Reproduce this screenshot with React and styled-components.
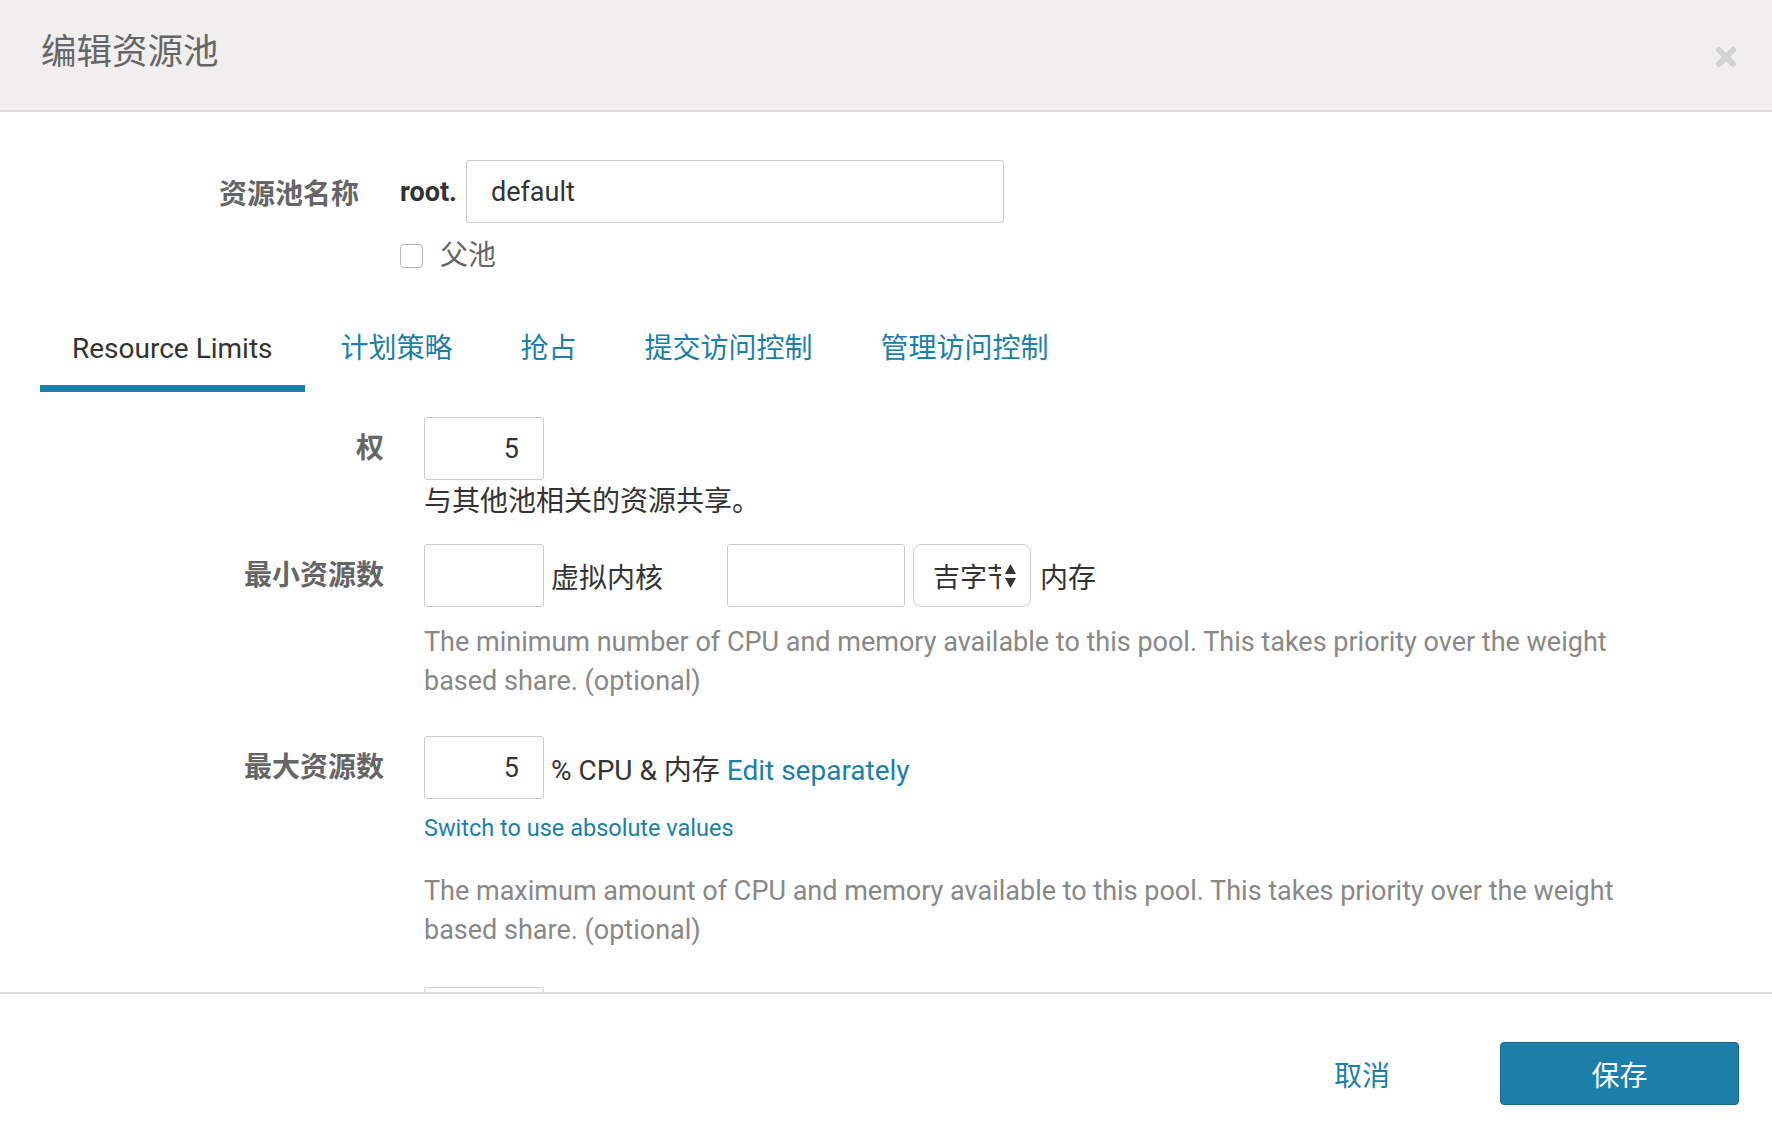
import React from 'react';
import styled, { createGlobalStyle } from 'styled-components';

const BLUE = '#1b7fa9';

const GlobalStyle = createGlobalStyle`
  html, body {
    margin: 0;
    padding: 0;
    height: 100%;
    overflow: hidden;
    background: #fff;
  }
  body {
    font-family: Roboto, "Noto Sans CJK SC", sans-serif;
    color: #333;
  }
  #root {
    height: 100%;
  }
  * {
    box-sizing: border-box;
  }
`;

const Modal = styled.div`
  height: 100vh;
  display: flex;
  flex-direction: column;
`;

const Header = styled.header`
  flex: 0 0 112px;
  background: #f0eeef;
  border-bottom: 2px solid #dcdcdc;
  display: flex;
  align-items: center;
  justify-content: space-between;
  padding: 0 35px 0 41px;
`;

const Title = styled.h1`
  margin: -4px 0 0;
  font-size: 35.5px;
  font-weight: 400;
  line-height: 1;
  color: #666;
`;

const CloseButton = styled.button`
  border: none;
  background: none;
  padding: 0;
  margin-top: 4px;
  width: 22px;
  height: 22px;
  display: flex;
  cursor: pointer;
`;

const Body = styled.div`
  flex: 1;
  overflow: hidden;
  padding-top: 48px;
`;

const NameRow = styled.div`
  display: flex;
  align-items: center;
`;

const NameLabel = styled.label`
  width: 359px;
  margin-right: 41px;
  text-align: right;
  font-size: 28px;
  font-weight: 700;
  color: #666;
`;

const Prefix = styled.span`
  font-size: 27px;
  font-weight: 700;
  color: #333;
  margin-right: 9px;
`;

const TextInput = styled.input`
  width: ${p => p.$width || 120}px;
  height: 63px;
  border: 1px solid #ccc;
  border-radius: 3px;
  padding: 0 24px;
  font-family: inherit;
  font-size: 27px;
  color: #333;
  text-align: ${p => (p.$right ? 'right' : 'left')};
  background: #fff;
  outline: none;
`;

const CheckRow = styled.label`
  display: flex;
  align-items: center;
  gap: 17px;
  margin-top: 21px;
  padding-left: 400px;
  font-size: 28px;
  color: #666;
  line-height: 24px;
`;

const CheckBox = styled.span`
  width: 23px;
  height: 24px;
  border: 1.5px solid #b5b5b5;
  border-radius: 4px;
  background: #fff;
`;

const Tabs = styled.ul`
  list-style: none;
  display: flex;
  gap: 4px;
  margin: 61px 0 0;
  padding: 0 0 0 40px;
`;

const Tab = styled.li`
  padding: 0 32px 16px;
  line-height: 40px;
  font-size: 28px;
  color: ${p => (p.$active ? '#333' : BLUE)};
  border-bottom: 7px solid ${p => (p.$active ? BLUE : 'transparent')};
  cursor: pointer;
`;

const FormGroup = styled.div`
  display: flex;
  align-items: flex-start;
  margin-top: ${p => p.$top || 0}px;
`;

const Label = styled.label`
  width: 384px;
  margin-right: 40px;
  text-align: right;
  line-height: 63px;
  font-size: 28px;
  font-weight: 700;
  color: #666;
  flex-shrink: 0;
`;

const Control = styled.div`
  display: flex;
  flex-direction: column;
  align-items: flex-start;
  width: 1250px;
`;

const InlineRow = styled.div`
  display: flex;
  align-items: center;
  font-size: 28px;
  color: #333;
`;

const Unit = styled.span`
  margin-left: ${p => p.$ml || 7}px;
  margin-right: ${p => p.$mr || 0}px;
  white-space: nowrap;
`;

const Link = styled.a`
  color: ${BLUE};
  text-decoration: none;
  cursor: pointer;
`;

const FakeSelect = styled.div`
  display: flex;
  align-items: center;
  width: 118px;
  height: 63px;
  margin-left: 8px;
  padding-left: 19px;
  border: 1px solid #ccc;
  border-radius: 8px;
  font-size: 27px;
  color: #333;
  background: #fff;
`;

const SelectText = styled.span`
  width: 68px;
  overflow: hidden;
  white-space: nowrap;
`;

const SelectArrows = styled.svg`
  margin-left: 3px;
`;

const HelpDark = styled.p`
  margin: 2px 0 0;
  line-height: 40px;
  font-size: 28px;
  color: #333;
`;

const HelpMuted = styled.p`
  margin: ${p => p.$top || 16}px 0 0;
  line-height: 39px;
  font-size: 27px;
  color: #888;
`;

const SwitchLink = styled(Link)`
  margin-top: 12px;
  font-size: 23.5px;
  line-height: 34px;
`;

const Footer = styled.footer`
  flex: 0 0 146px;
  border-top: 2px solid #ddd;
  display: flex;
  justify-content: flex-end;
  align-items: flex-start;
  padding: 48px 33px 0 0;
`;

const CancelButton = styled.button`
  height: 63px;
  padding: 0 30px;
  margin-right: 80px;
  border: none;
  background: none;
  color: ${BLUE};
  font-family: inherit;
  font-size: 28px;
  cursor: pointer;
`;

const SaveButton = styled.button`
  width: 239px;
  height: 63px;
  border: 1px solid #16698d;
  border-radius: 4px;
  background: ${BLUE};
  color: #fff;
  font-family: inherit;
  font-size: 28px;
  cursor: pointer;
`;

const tabs = ['Resource Limits', '计划策略', '抢占', '提交访问控制', '管理访问控制'];

export default function App() {
  return (
    <>
      <GlobalStyle />
      <Modal>
        <Header>
          <Title>编辑资源池</Title>
          <CloseButton aria-label="close">
            <svg width="22" height="22" viewBox="0 0 22 22">
              <path
                d="M4 4 L18 18 M18 4 L4 18"
                stroke="#d2d2d2"
                strokeWidth="6"
                strokeLinecap="round"
                fill="none"
              />
            </svg>
          </CloseButton>
        </Header>

        <Body>
          <NameRow>
            <NameLabel>资源池名称</NameLabel>
            <Prefix>root.</Prefix>
            <TextInput $width={538} defaultValue="default" />
          </NameRow>
          <CheckRow>
            <CheckBox />
            父池
          </CheckRow>

          <Tabs>
            {tabs.map((t, i) => (
              <Tab key={t} $active={i === 0}>{t}</Tab>
            ))}
          </Tabs>

          <FormGroup $top={25}>
            <Label>权</Label>
            <Control>
              <TextInput $right defaultValue="5" />
              <HelpDark>与其他池相关的资源共享。</HelpDark>
            </Control>
          </FormGroup>

          <FormGroup $top={22}>
            <Label>最小资源数</Label>
            <Control>
              <InlineRow>
                <TextInput $right />
                <Unit $mr={64}>虚拟内核</Unit>
                <TextInput $right $width={178} />
                <FakeSelect>
                  <SelectText>吉字节</SelectText>
                  <SelectArrows width="13" height="26" viewBox="0 0 13 26">
                    <path d="M6.5 1 L12 11 L1 11 Z M1 15 L12 15 L6.5 25 Z" fill="#333" />
                  </SelectArrows>
                </FakeSelect>
                <Unit $ml={9}>内存</Unit>
              </InlineRow>
              <HelpMuted>
                The minimum number of CPU and memory available to this pool. This takes priority over the weight based share. (optional)
              </HelpMuted>
            </Control>
          </FormGroup>

          <FormGroup $top={35}>
            <Label>最大资源数</Label>
            <Control>
              <InlineRow>
                <TextInput $right defaultValue="5" />
                <Unit>% CPU &amp; 内存 <Link>Edit separately</Link></Unit>
              </InlineRow>
              <SwitchLink>Switch to use absolute values</SwitchLink>
              <HelpMuted $top={27}>
                The maximum amount of CPU and memory available to this pool. This takes priority over the weight based share. (optional)
              </HelpMuted>
            </Control>
          </FormGroup>

          <FormGroup $top={37}>
            <Label />
            <Control>
              <TextInput $right />
            </Control>
          </FormGroup>
        </Body>

        <Footer>
          <CancelButton>取消</CancelButton>
          <SaveButton>保存</SaveButton>
        </Footer>
      </Modal>
    </>
  );
}
